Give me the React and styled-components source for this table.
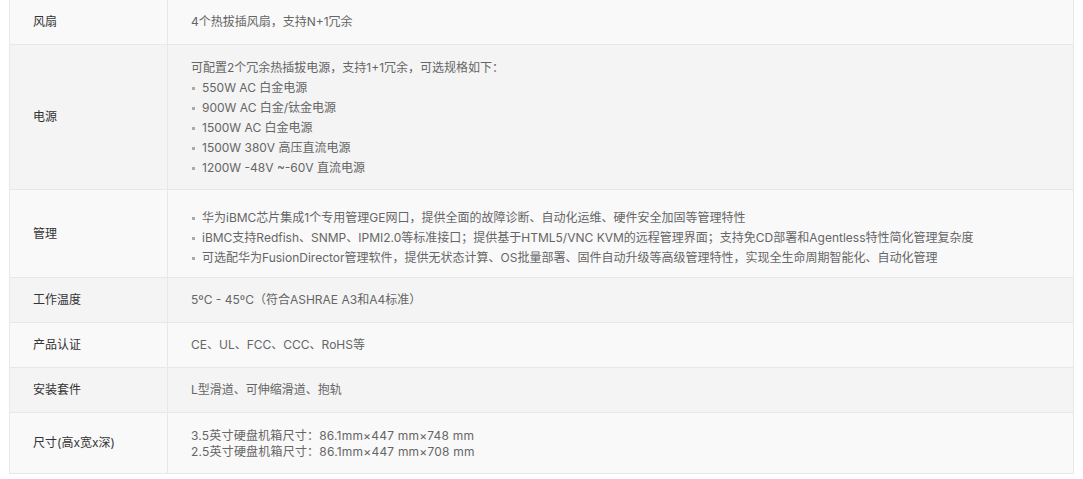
import React from "react";
import styled, { createGlobalStyle } from "styled-components";

const Global = createGlobalStyle`
  html, body { margin: 0; padding: 0; background: #fff; }
  body { font-family: Inter, "Noto Sans CJK SC", sans-serif; }
`;

const Page = styled.div`
  padding: 0 9px;
  margin-top: -1px;
`;

const Table = styled.table`
  width: 1065px;
  border-collapse: collapse;
  table-layout: fixed;
  border: 1px solid #e8e8e8;
  font-size: 12px;
  line-height: 20px;
`;

const Row = styled.tr`
  background: ${(p) => (p.$alt ? "#f4f4f4" : "#f9f9f9")};
`;

const LabelCell = styled.td`
  width: 158px;
  box-sizing: border-box;
  padding: 12px 10px 12px 23px;
  border: 1px solid #e8e8e8;
  color: #333;
  vertical-align: middle;
`;

const ValueCell = styled.td`
  padding: ${(p) => p.$pad || "12px 23px"};
  border: 1px solid #e8e8e8;
  color: #666;
  vertical-align: middle;
  line-height: ${(p) => p.$lh || "20px"};
`;

const Para = styled.div``;

const Dim = styled.div`
  letter-spacing: 0.2px;
`;

const List = styled.ul`
  list-style: none;
  margin: 0;
  padding: 0;
`;

const Item = styled.li`
  position: relative;
  padding-left: 11px;
  &::before {
    content: "";
    position: absolute;
    left: 1px;
    top: 9px;
    width: 3px;
    height: 3px;
    background: #aaa;
  }
`;

const rows = [
  { label: "风扇", value: <Para>4个热拔插风扇，支持N+1冗余</Para> },
  {
    label: "电源",
    pad: "13px 23px 11px",
    value: (
      <>
        <Para>可配置2个冗余热插拔电源，支持1+1冗余，可选规格如下：</Para>
        <List>
          <Item>550W AC 白金电源</Item>
          <Item>900W AC 白金/钛金电源</Item>
          <Item>1500W AC 白金电源</Item>
          <Item>1500W 380V 高压直流电源</Item>
          <Item>1200W -48V ~-60V 直流电源</Item>
        </List>
      </>
    ),
  },
  {
    label: "管理",
    pad: "18px 23px 9px",
    value: (
      <List>
        <Item>华为iBMC芯片集成1个专用管理GE网口，提供全面的故障诊断、自动化运维、硬件安全加固等管理特性</Item>
        <Item>iBMC支持Redfish、SNMP、IPMI2.0等标准接口；提供基于HTML5/VNC KVM的远程管理界面；支持免CD部署和Agentless特性简化管理复杂度</Item>
        <Item>可选配华为FusionDirector管理软件，提供无状态计算、OS批量部署、固件自动升级等高级管理特性，实现全生命周期智能化、自动化管理</Item>
      </List>
    ),
  },
  { label: "工作温度", value: <Para>5ºC - 45ºC（符合ASHRAE A3和A4标准）</Para> },
  { label: "产品认证", value: <Para>CE、UL、FCC、CCC、RoHS等</Para> },
  { label: "安装套件", value: <Para>L型滑道、可伸缩滑道、抱轨</Para> },
  {
    label: "尺寸(高x宽x深)",
    pad: "15px 23px 13px",
    lh: "16px",
    value: (
      <>
        <Dim>3.5英寸硬盘机箱尺寸：86.1mm×447 mm×748 mm</Dim>
        <Dim>2.5英寸硬盘机箱尺寸：86.1mm×447 mm×708 mm</Dim>
      </>
    ),
  },
];

export default function App() {
  return (
    <>
      <Global />
      <Page>
        <Table>
          <tbody>
            {rows.map((r, i) => (
              <Row key={r.label} $alt={i % 2 === 1}>
                <LabelCell>{r.label}</LabelCell>
                <ValueCell $pad={r.pad} $lh={r.lh}>
                  {r.value}
                </ValueCell>
              </Row>
            ))}
          </tbody>
        </Table>
      </Page>
    </>
  );
}
